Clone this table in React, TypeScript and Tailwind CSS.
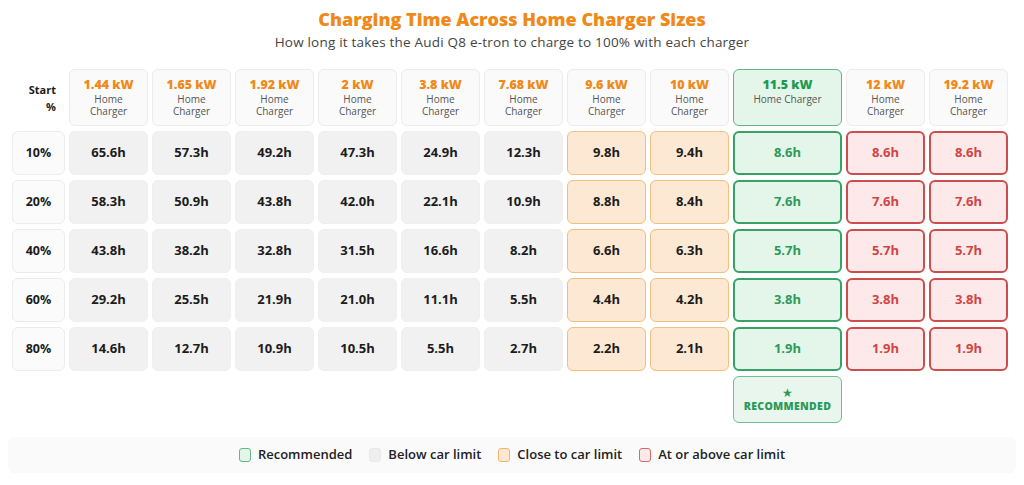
const chargers = [
  { kw: "1.44 kW", kind: "gray" },
  { kw: "1.65 kW", kind: "gray" },
  { kw: "1.92 kW", kind: "gray" },
  { kw: "2 kW", kind: "gray" },
  { kw: "3.8 kW", kind: "gray" },
  { kw: "7.68 kW", kind: "gray" },
  { kw: "9.6 kW", kind: "orange" },
  { kw: "10 kW", kind: "orange" },
  { kw: "11.5 kW", kind: "green" },
  { kw: "12 kW", kind: "red" },
  { kw: "19.2 kW", kind: "red" },
];

const rows = [
  { start: "10%", values: ["65.6h", "57.3h", "49.2h", "47.3h", "24.9h", "12.3h", "9.8h", "9.4h", "8.6h", "8.6h", "8.6h"] },
  { start: "20%", values: ["58.3h", "50.9h", "43.8h", "42.0h", "22.1h", "10.9h", "8.8h", "8.4h", "7.6h", "7.6h", "7.6h"] },
  { start: "40%", values: ["43.8h", "38.2h", "32.8h", "31.5h", "16.6h", "8.2h", "6.6h", "6.3h", "5.7h", "5.7h", "5.7h"] },
  { start: "60%", values: ["29.2h", "25.5h", "21.9h", "21.0h", "11.1h", "5.5h", "4.4h", "4.2h", "3.8h", "3.8h", "3.8h"] },
  { start: "80%", values: ["14.6h", "12.7h", "10.9h", "10.5h", "5.5h", "2.7h", "2.2h", "2.1h", "1.9h", "1.9h", "1.9h"] },
];

const cellClass: Record<string, string> = {
  gray: "bg-[#f1f1f1] border border-[#efefef] text-[#1c1c1c]",
  orange: "bg-[#fde9d3] border border-[#f1c07c] text-[#1c1c1c]",
  green: "bg-[#e4f5ea] border-2 border-[#38a266] text-[#2e9a5a]",
  red: "bg-[#fde9e9] border-2 border-[#cc4d4d] text-[#cf4444]",
};

const legend = [
  { label: "Recommended", sw: "bg-[#e4f5ea] border-[#62b887]" },
  { label: "Below car limit", sw: "bg-[#eeeeee] border-[#e8e8e8]" },
  { label: "Close to car limit", sw: "bg-[#fde9d3] border-[#efb66a]" },
  { label: "At or above car limit", sw: "bg-[#fde9e9] border-[#d66a6a]" },
];

export default function App() {
  return (
    <div
      className="w-[1024px] h-[485px] bg-white overflow-hidden px-[12px] pt-[7px] text-[#1c1c1c]"
      style={{ fontFamily: '"Open Sans", "Liberation Sans", sans-serif' }}
    >
      <h1 className="text-center text-[18px] leading-[24px] font-extrabold text-[#ef8a1a]">
        Charging Time Across Home Charger Sizes
      </h1>
      <p className="text-center text-[13.5px] leading-[18px] mt-[2px] text-[#444] tracking-[0.2px]">
        How long it takes the Audi Q8 e-tron to charge to 100% with each charger
      </p>

      <div className="mt-[18px] grid grid-cols-[53px_repeat(8,79px)_109px_79px_79px] gap-x-[4px] gap-y-[5px] grid-rows-[57px_repeat(5,44px)_47px]">
        {/* header row */}
        <div className="flex flex-col items-end justify-center pr-[9px] text-[11px] leading-[17px] font-bold">
          <span>Start</span>
          <span>%</span>
        </div>
        {chargers.map((c) =>
          c.kind === "green" ? (
            <div
              key={c.kw}
              className="rounded-[6px] bg-[#e4f5ea] border-[1.5px] border-[#5fb884] flex flex-col items-center pt-[7px]"
            >
              <span className="text-[12.5px] leading-[16px] font-extrabold text-[#1f9a52]">{c.kw}</span>
              <span className="text-[10px] leading-[13px] text-[#555]">Home Charger</span>
            </div>
          ) : (
            <div
              key={c.kw}
              className="rounded-[6px] bg-[#fafafa] border border-[#ececec] flex flex-col items-center pt-[7px]"
            >
              <span className="text-[12.5px] leading-[16px] font-extrabold text-[#ef8a1a]">{c.kw}</span>
              <span className="text-[10px] leading-[12px] text-[#555]">Home</span>
              <span className="text-[10px] leading-[12px] text-[#555]">Charger</span>
            </div>
          )
        )}

        {/* data rows */}
        {rows.map((r) => (
          <div key={r.start} className="contents">
            <div className="rounded-[6px] bg-[#fbfbfb] border border-[#ececec] flex items-center justify-center text-[12.5px] font-bold">
              {r.start}
            </div>
            {r.values.map((v, i) => (
              <div
                key={i}
                className={`rounded-[6px] flex items-center justify-center text-[13px] font-bold ${cellClass[chargers[i].kind]}`}
              >
                {v}
              </div>
            ))}
          </div>
        ))}

        {/* recommended badge */}
        <div className="col-start-10 rounded-[6px] bg-[#e8f6ed] border border-[#6cc08f] flex flex-col items-center justify-center text-[#2a9a58]">
          <span className="text-[12px] leading-[13px]">★</span>
          <span className="text-[10.5px] leading-[15px] font-extrabold tracking-[0.3px]">RECOMMENDED</span>
        </div>
      </div>

      <div className="mt-[14px] -mx-[4px] h-[36px] rounded-[6px] bg-[#fafafa] flex items-center justify-center gap-[17px]">
        {legend.map((l) => (
          <div key={l.label} className="flex items-center gap-[7px]">
            <span className={`w-[12px] h-[14px] rounded-[3px] border-[1.5px] ${l.sw}`} />
            <span className="text-[13px] font-semibold text-[#222]">{l.label}</span>
          </div>
        ))}
      </div>
    </div>
  );
}
